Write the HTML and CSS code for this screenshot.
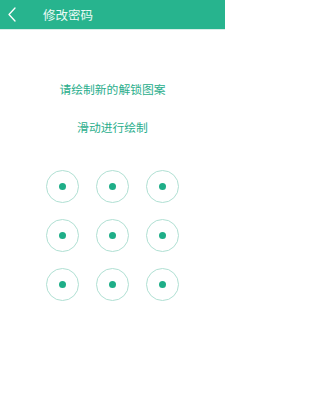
FILE: index.html
```html
<!DOCTYPE html>
<html lang="zh">
<head>
<meta charset="utf-8">
<meta name="viewport" content="width=225">
<link rel="stylesheet" href="styles.css">
</head>
<body>
<div class="screen">
  <header class="topbar">
    <span class="back">
      <svg width="8" height="15" viewBox="0 0 8 15"><path d="M7 1 L1 7.5 L7 14" fill="none" stroke="#fff" stroke-width="1.3" stroke-linecap="round" stroke-linejoin="round"/></svg>
    </span>
    <span class="title">修改密码</span>
  </header>
  <main class="content">
    <p class="hint">请绘制新的解锁图案</p>
    <p class="sub">滑动进行绘制</p>
    <div class="grid">
      <div class="node"><span class="dot"></span></div>
      <div class="node"><span class="dot"></span></div>
      <div class="node"><span class="dot"></span></div>
      <div class="node"><span class="dot"></span></div>
      <div class="node"><span class="dot"></span></div>
      <div class="node"><span class="dot"></span></div>
      <div class="node"><span class="dot"></span></div>
      <div class="node"><span class="dot"></span></div>
      <div class="node"><span class="dot"></span></div>
    </div>
  </main>
</div>
</body>
</html>
```
FILE: styles.css
```css
html, body {
  margin: 0;
  padding: 0;
  background: #ffffff;
  font-family: "Noto Sans CJK SC", "Noto Sans", sans-serif;
}
.screen {
  width: 225px;
  height: 400px;
  overflow: hidden;
}
.topbar {
  height: 29px;
  background: #27b48e;
  border-bottom: 1px solid #d7eee8;
  display: flex;
  align-items: center;
  color: #ffffff;
}
.back {
  width: 8px;
  height: 15px;
  margin-left: 8px;
  display: flex;
}
.title {
  margin-left: 27px;
  font-size: 12.5px;
  line-height: 16px;
  color: #eafaf5;
}
.content {
  display: flex;
  flex-direction: column;
  align-items: center;
}
.hint {
  margin: 51px 0 0;
  font-size: 11.8px;
  line-height: 16px;
  color: #2aae8c;
}
.sub {
  margin: 22px 0 0;
  font-size: 11.8px;
  line-height: 16px;
  color: #2aae8c;
}
.grid {
  margin-top: 35px;
  display: grid;
  grid-template-columns: repeat(3, 33px);
  grid-auto-rows: 33px;
  column-gap: 17px;
  row-gap: 16px;
}
.node {
  box-sizing: border-box;
  width: 33px;
  height: 33px;
  border: 1px solid #b0e0d3;
  border-radius: 50%;
  display: flex;
  align-items: center;
  justify-content: center;
}
.dot {
  width: 7px;
  height: 7px;
  border-radius: 50%;
  background: #1eae88;
}
```
